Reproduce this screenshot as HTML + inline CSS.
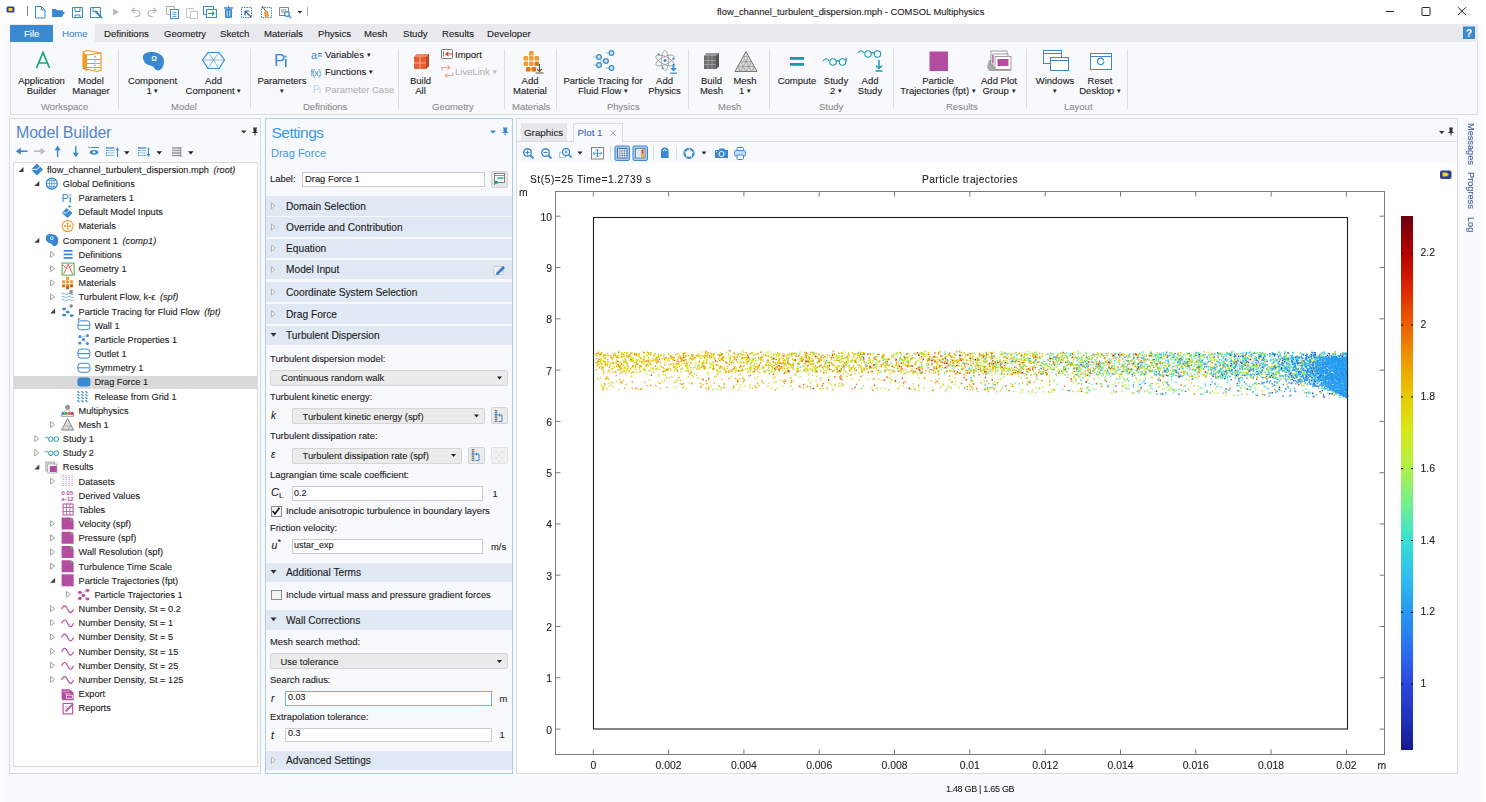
<!DOCTYPE html>
<html><head><meta charset="utf-8">
<style>
*{box-sizing:border-box;margin:0;padding:0}
html,body{width:1486px;height:802px;overflow:hidden}
body{position:relative;background:#f9fafd;font-family:"Liberation Sans",sans-serif;color:#1a1a1a;font-size:9.5px;-webkit-text-stroke:0.1px currentColor}
.a{position:absolute}
.t{position:absolute;white-space:nowrap;line-height:1}
svg{position:absolute;overflow:visible}
/* title bar */
#title{left:0;top:0;width:1486px;height:24px;background:#fff}
/* ribbon */
#tabs{left:10px;top:24px;width:1468px;height:19px;background:#e9eaee}
#file{left:10px;top:25px;width:43px;height:17px;background:#3b89d0;color:#fff}
#home{left:53px;top:24px;width:42px;height:19px;background:#f8f9fd}
#rbody{left:10px;top:42px;width:1468px;height:73px;background:#f8f9fd;border:1px solid #dcdde2;border-top:none}
.tab{font-size:9.6px;top:29.2px}
.sep{position:absolute;width:1px;background:#dcdde3;top:49px;height:60px}
.rl{font-size:9.5px;color:#222;text-align:center;line-height:10px;position:absolute;white-space:nowrap}
.gl{font-size:9.5px;color:#8c8c8c;position:absolute;top:101.3px;white-space:nowrap}
.cr{font-size:7px;vertical-align:1px}
.sm{font-size:9.5px;position:absolute;white-space:nowrap}
/* panels */
#mb{left:9px;top:118px;width:252px;height:656px;border:1px solid #d8d9de;background:#f9fafd}
#tree{left:13px;top:162px;width:245px;height:605px;border:1px solid #dcdcdc;background:#fff}
#st{left:265px;top:118px;width:248px;height:656px;border:1px solid #a6cff3;background:#f8f9fd}
#gr{left:516px;top:118px;width:942px;height:656px;border:1px solid #dadbe0;background:#f8f9fc}
.ttl{font-size:16px;color:#5686c6;letter-spacing:-0.2px;-webkit-text-stroke:0}
.row{position:absolute;font-size:9.2px;white-space:nowrap;line-height:1}
.sh{position:absolute;left:266px;width:246px;height:19.5px;background:#dfe8f3}
.sht{position:absolute;left:286px;font-size:10.2px;white-space:nowrap;line-height:1}
.dd{position:absolute;background:#ebebeb;border:1px solid #d6d6d6;border-radius:2px}
.inp{position:absolute;background:#fff;border:1px solid #cdcdcd}
.pl{font-size:10.4px;color:#222}
.lab{position:absolute;left:270px;font-size:9.4px;white-space:nowrap;line-height:1}
</style></head><body>
<div id="title" class="a"></div>
<div class="a" style="left:0;top:24px;width:4px;height:778px;background:#fdfdfe"></div>
<div class="a" style="left:1483px;top:24px;width:3px;height:778px;background:#fdfdfe"></div>
<div class="t" style="left:717px;top:7px;font-size:9.4px;color:#1a1a1a">flow_channel_turbulent_dispersion.mph - COMSOL Multiphysics</div>

<div id="tabs" class="a"></div>
<div id="rbody" class="a"></div>
<div id="home" class="a"></div>
<div id="file" class="a"></div>
<div class="t tab" style="left:24px;color:#fff">File</div>
<div class="t tab" style="left:62px;color:#3d8ad4">Home</div>
<div class="t tab" style="left:104px">Definitions</div>
<div class="t tab" style="left:164px">Geometry</div>
<div class="t tab" style="left:220px">Sketch</div>
<div class="t tab" style="left:264px">Materials</div>
<div class="t tab" style="left:318px">Physics</div>
<div class="t tab" style="left:364px">Mesh</div>
<div class="t tab" style="left:403px">Study</div>
<div class="t tab" style="left:442px">Results</div>
<div class="t tab" style="left:487px">Developer</div>


<!-- ribbon separators -->
<div class="sep" style="left:118px"></div>
<div class="sep" style="left:250px"></div>
<div class="sep" style="left:398px"></div>
<div class="sep" style="left:504px"></div>
<div class="sep" style="left:556px"></div>
<div class="sep" style="left:688px"></div>
<div class="sep" style="left:769px"></div>
<div class="sep" style="left:893px"></div>
<div class="sep" style="left:1026px"></div>
<div class="sep" style="left:1127px"></div>
<!-- large button labels -->
<div class="rl" style="left:11px;width:61px;top:76px">Application<br>Builder</div>
<div class="rl" style="left:66px;width:50px;top:76px">Model<br>Manager</div>
<div class="rl" style="left:122px;width:61px;top:76px">Component<br>1 <span class="cr">&#9662;</span></div>
<div class="rl" style="left:180px;width:67px;top:76px">Add<br>Component <span class="cr">&#9662;</span></div>
<div class="rl" style="left:255px;width:54px;top:76px">Parameters<br><span class="cr">&#9662;</span></div>
<div class="rl" style="left:405px;width:31px;top:76px">Build<br>All</div>
<div class="rl" style="left:508px;width:44px;top:76px">Add<br>Material</div>
<div class="rl" style="left:560px;width:86px;top:76px">Particle Tracing for<br>Fluid Flow <span class="cr">&#9662;</span></div>
<div class="rl" style="left:646px;width:37px;top:76px">Add<br>Physics</div>
<div class="rl" style="left:695px;width:33px;top:76px">Build<br>Mesh</div>
<div class="rl" style="left:729px;width:32px;top:76px">Mesh<br>1 <span class="cr">&#9662;</span></div>
<div class="rl" style="left:774px;width:46px;top:76px">Compute</div>
<div class="rl" style="left:819px;width:34px;top:76px">Study<br>2 <span class="cr">&#9662;</span></div>
<div class="rl" style="left:853px;width:34px;top:76px">Add<br>Study</div>
<div class="rl" style="left:898px;width:80px;top:76px">Particle<br>Trajectories (fpt) <span class="cr">&#9662;</span></div>
<div class="rl" style="left:978px;width:42px;top:76px">Add Plot<br>Group <span class="cr">&#9662;</span></div>
<div class="rl" style="left:1033px;width:44px;top:76px">Windows<br><span class="cr">&#9662;</span></div>
<div class="rl" style="left:1077px;width:46px;top:76px">Reset<br>Desktop <span class="cr">&#9662;</span></div>
<!-- group labels -->
<div class="gl" style="left:41px">Workspace</div>
<div class="gl" style="left:171px">Model</div>
<div class="gl" style="left:303px">Definitions</div>
<div class="gl" style="left:432px">Geometry</div>
<div class="gl" style="left:512px">Materials</div>
<div class="gl" style="left:607px">Physics</div>
<div class="gl" style="left:718px">Mesh</div>
<div class="gl" style="left:819px">Study</div>
<div class="gl" style="left:946px">Results</div>
<div class="gl" style="left:1064px">Layout</div>
<!-- small buttons -->
<div class="sm" style="left:325px;top:49px">Variables <span class="cr">&#9662;</span></div>
<div class="sm" style="left:325px;top:66px">Functions <span class="cr">&#9662;</span></div>
<div class="sm" style="left:325px;top:84px;color:#b4b4b4">Parameter Case</div>
<div class="sm" style="left:455px;top:49px">Import</div>
<div class="sm" style="left:455px;top:66px;color:#b4b4b4">LiveLink <span class="cr">&#9662;</span></div>


<svg class="a" style="left:0;top:0" width="1486" height="120" viewBox="0 0 1486 120">
<!-- title bar -->
<rect x="6.5" y="6.5" width="8" height="6" rx="1.5" fill="#2a3f9a"/><rect x="8.5" y="8" width="4" height="3" fill="#f2d21a"/>
<line x1="27.5" y1="6" x2="27.5" y2="16" stroke="#8a8a8a"/>
<path d="M35.5 6.5h6l3.5 3.5v8h-9.5z M41.5 6.5v3.5h3.5" fill="none" stroke="#3a89d0" stroke-width="1"/>
<path d="M52 9h4l1 1.2h6v2H56l-3 5H52z M53 17l3-5h9l-3 5z" fill="#3a89d0"/>
<path d="M72.5 7.5h10v10h-10z M75 7.5v4h5v-4 M75 17.5v-2.5h5v2.5" fill="none" stroke="#3a89d0" stroke-width="1"/>
<path d="M90.5 7.5h10v10h-10z M93 7.5v4h5" fill="none" stroke="#3a89d0" stroke-width="1"/><path d="M95 11l7 7" stroke="#3a89d0" stroke-width="1.8"/>
<path d="M113 8.5l6 3.5-6 3.5z" fill="#b8b8b8"/>
<path d="M132 10.5h5a3 3 0 0 1 0 6h-2 M134.5 8l-2.5 2.5 2.5 2.5" fill="none" stroke="#b8b8b8" stroke-width="1.2"/>
<path d="M156 10.5h-5a3 3 0 0 0 0 6h2 M153.5 8l2.5 2.5-2.5 2.5" fill="none" stroke="#b8b8b8" stroke-width="1.2"/>
<path d="M166.5 6.5h8v8h-8z" fill="none" stroke="#9a9a9a" stroke-width="0.8"/><rect x="170.5" y="9.5" width="8" height="9" fill="#fff" stroke="#3a89d0"/><path d="M172.5 12.5h4M172.5 14.5h4M172.5 16.5h4" stroke="#3a89d0" stroke-width="0.8"/>
<path d="M186.5 8.5h7v9h-7z" fill="none" stroke="#c8c8c8"/><rect x="190.5" y="11.5" width="7" height="7" fill="#fff" stroke="#c8c8c8"/>
<rect x="203.5" y="6.5" width="10" height="8" fill="none" stroke="#3a89d0"/><rect x="206.5" y="9.5" width="10" height="8" fill="#fff" stroke="#3a89d0"/><path d="M208 13.5h6M212 11.5l2 2-2 2" fill="none" stroke="#3a89d0" stroke-width="1.2"/>
<path d="M224 8h9M228 6.5h1" stroke="#3a89d0" stroke-width="1.3"/><rect x="225" y="9" width="7" height="9" rx="1" fill="#3a89d0"/><path d="M227.2 10.5v6M229.8 10.5v6" stroke="#fff" stroke-width="0.8"/>
<rect x="241.5" y="7.5" width="10" height="10" fill="none" stroke="#3a89d0" stroke-dasharray="1.5 1"/><path d="M245 11l6 6M245 11v4.5M245 11h4.5" fill="none" stroke="#2a5fa0" stroke-width="1.2"/>
<rect x="261.5" y="7.5" width="10" height="10" fill="none" stroke="#3a89d0" stroke-dasharray="1.5 1"/><path d="M262 6l5 7" stroke="#555" stroke-width="1"/><path d="M264 12l4-1 1 5-4 2z" fill="#f0a040"/>
<path d="M279.5 7.5h9v8h-9z M281 10h5M281 12h4" fill="none" stroke="#777" stroke-width="0.9"/><circle cx="287" cy="14" r="2.3" fill="#fff" stroke="#3a89d0" stroke-width="1.2"/><path d="M288.6 15.6l2.5 2.5" stroke="#3a89d0" stroke-width="1.4"/>
<path d="M297.5 11h4.5l-2.25 2.5z" fill="#222"/>
<line x1="307.5" y1="7" x2="307.5" y2="16" stroke="#aaa"/>
<!-- window controls -->
<line x1="1386" y1="11.5" x2="1394" y2="11.5" stroke="#222" stroke-width="1"/>
<rect x="1422" y="7.5" width="8" height="8" rx="0.8" fill="none" stroke="#222" stroke-width="1"/>
<path d="M1458 7.2l8 8M1466 7.2l-8 8" stroke="#222" stroke-width="1"/>
<rect x="1463" y="26.5" width="12" height="12.5" fill="#3a89d0"/><text x="1469" y="36.5" font-size="10.5" font-weight="bold" fill="#fff" text-anchor="middle" font-family="Liberation Sans">?</text>
<!-- Workspace -->
<path d="M36.5 68L43 52.5 49.5 68M38.8 63h8.4" fill="none" stroke="#1aa37a" stroke-width="1.7"/>
<path d="M83 52l4-1.5 14 2.5v17l-4 1.5-14-3z" fill="#fff" stroke="#f09a2a" stroke-width="1.2"/>
<path d="M83 52l4 3v16.5l-4-3z" fill="#f09a2a"/><path d="M87 55l14-2" stroke="#f09a2a" stroke-width="1.2"/>
<path d="M87 59.5h14M87 63.5h14M87 67.5h14" stroke="#f09a2a" stroke-width="1.2"/>
<path d="M95 56v1.5M95 60.5v1.5M95 64.5v1.5M95 68.5v1.5" stroke="#3a5a9a" stroke-width="0.8"/>
<!-- Model -->
<path d="M143 57c0-4 5-5.5 10-5 6 .5 11 4 11 9 0 4-2 9.5-6 9.5-3 0-3.5-3-5-4-3-1.5-10-1.5-10-9.5z" fill="#3a89d0"/>
<text x="154" y="61" font-size="7" fill="#fff" text-anchor="middle" font-family="Liberation Sans" font-weight="bold">Ω</text>
<path d="M202.5 60l5.5-7.5h11l5.5 7.5-5.5 8.5h-11z" fill="none" stroke="#3a89d0" stroke-width="1.2"/>
<path d="M208 52.5l5.5 7.5-5.5 8.5M219 52.5l-5.5 7.5 5.5 8.5M202.5 60h22" fill="none" stroke="#3a89d0" stroke-width="0.8" opacity="0.7"/>
<!-- Definitions -->
<text x="274" y="66" font-size="17" fill="#3a89d0" font-family="Liberation Sans">P</text><rect x="285" y="59" width="1.6" height="8" fill="#3a89d0"/><rect x="285" y="55.5" width="1.6" height="1.8" fill="#3a89d0"/>
<text x="311" y="58.5" font-size="11" fill="#3a89d0" font-family="Liberation Sans">a</text><path d="M318 53.5h4M318 56h4" stroke="#3a89d0" stroke-width="1"/>
<text x="310.5" y="75.5" font-size="8.5" fill="#3a89d0" font-family="Liberation Sans" letter-spacing="-0.6">f(x)</text>
<text x="313" y="92.5" font-size="10" fill="#bcd6ee" font-family="Liberation Sans">P</text><rect x="319.5" y="88.5" width="1.2" height="5" fill="#bcd6ee"/>
<!-- Geometry -->
<path d="M414 57l3-3h12v12l-3 3h-12z" fill="#e45d33"/><path d="M417 54h12l-3 3h-12z" fill="#f28a68"/><path d="M426 57v12l3-3V54z" fill="#c24822"/>
<path d="M414 63h12M420 57v12" stroke="#f8b49a" stroke-width="0.9"/>
<rect x="441.5" y="49.5" width="11" height="9" rx="1" fill="#fff" stroke="#777" stroke-width="1"/><path d="M443.5 51.5v5" stroke="#777"/><path d="M446 54h7M448.5 52l-2.5 2 2.5 2" fill="none" stroke="#e0402a" stroke-width="1.2"/>
<path d="M442 70.5v-3h8M447.5 65.5l2.5 2-2.5 2 M453 72.5v3h-8M447.5 77.5l-2.5-2 2.5-2" fill="none" stroke="#f0a898" stroke-width="1.2"/>
<!-- Materials -->
<g fill="#f0a030"><rect x="529" y="51" width="4.6" height="4.6" rx="1.2"/><rect x="523.5" y="56" width="4.6" height="4.6" rx="1.2"/><rect x="529" y="56" width="4.6" height="4.6" rx="1.2"/><rect x="534.5" y="56" width="4.6" height="4.6" rx="1.2"/><rect x="523.5" y="61.5" width="4.6" height="4.6" rx="1.2"/><rect x="529" y="61.5" width="4.6" height="4.6" rx="1.2"/><rect x="534.5" y="61.5" width="4.6" height="4.6" rx="1.2" fill="#d88018"/><rect x="526" y="67" width="4.6" height="4.6" rx="1.2" fill="#d07a18"/><rect x="531.5" y="67" width="4.6" height="4.6" rx="1.2" fill="#d07a18"/></g>
<path d="M539.5 64v7M536.8 68.8l2.7 2.7 2.7-2.7M535.5 73h8" fill="none" stroke="#555" stroke-width="1.1"/>
<!-- Physics -->
<path d="M593 57h3.5" stroke="#c0d8f0" stroke-width="1.8"/><circle cx="599" cy="57" r="2.3" fill="#d4e6f6" stroke="#3a89d0" stroke-width="1.3"/><path d="M600 61h3.5" stroke="#c0d8f0" stroke-width="1.8"/><circle cx="606" cy="61" r="2.3" fill="#d4e6f6" stroke="#3a89d0" stroke-width="1.3"/><path d="M593 65h3.5" stroke="#c0d8f0" stroke-width="1.8"/><circle cx="599" cy="65" r="2.3" fill="#d4e6f6" stroke="#3a89d0" stroke-width="1.3"/><path d="M605.5 53h3.5" stroke="#c0d8f0" stroke-width="1.8"/><circle cx="611.5" cy="53" r="2.3" fill="#d4e6f6" stroke="#3a89d0" stroke-width="1.3"/><path d="M605.5 68h3.5" stroke="#c0d8f0" stroke-width="1.8"/><circle cx="611.5" cy="68" r="2.3" fill="#d4e6f6" stroke="#3a89d0" stroke-width="1.3"/>
<g fill="none" stroke="#999" stroke-width="0.8"><ellipse cx="665" cy="60.5" rx="10" ry="3.8" transform="rotate(25 665 60.5)"/><ellipse cx="665" cy="60.5" rx="10" ry="3.8" transform="rotate(-25 665 60.5)"/><ellipse cx="665" cy="60.5" rx="3.5" ry="10"/></g>
<circle cx="665" cy="60.5" r="1.5" fill="#3a89d0"/><circle cx="658.5" cy="54.5" r="1.1" fill="#3a89d0"/><circle cx="673.5" cy="58.5" r="1.1" fill="#3a89d0"/><circle cx="662.5" cy="68" r="1.1" fill="#3a89d0"/>
<path d="M673.5 64v4.5" stroke="#3a89d0" stroke-width="1.8"/><path d="M670.3 68h6.4l-3.2 3.5z" fill="#3a89d0"/><path d="M670 73.2h7" stroke="#3a89d0" stroke-width="1.2"/>
<!-- Mesh -->
<path d="M704 56l3-3h12v13l-3 3h-12z" fill="#6d6d6d"/><path d="M707 53h12l-3 3h-12z" fill="#999"/><path d="M716 56v13l3-3V53z" fill="#555"/>
<path d="M704 60.5h12M704 64.5h12M708 56v13M712 56v13" stroke="#aaa" stroke-width="0.7"/>
<path d="M746 51.5l11 20h-22z" fill="#d8d8d8" stroke="#777" stroke-width="1"/>
<path d="M743.25 56.5h5.5M740.5 61.5h11M737.75 66.5h16.5M743.25 56.5l8.25 15M740.5 61.5l5.5 10M737.75 66.5l2.75 5M748.75 56.5l-8.25 15M751.5 61.5l-5.5 10M754.25 66.5l-2.75 5" stroke="#888" stroke-width="0.6"/>
<!-- Study -->
<rect x="790" y="57" width="14" height="2.8" fill="#1e9ab0"/><rect x="790" y="63" width="14" height="2.8" fill="#1e9ab0"/>
<g fill="none" stroke="#1e9ab0" stroke-width="1.1"><path d="M823 61c2-3 4-3 6 0"/><circle cx="833" cy="62" r="3.2"/><circle cx="842.5" cy="62" r="3.2"/><path d="M836.2 61.5c1-1 2.3-1 3.3 0M845.7 62c.5-2.5 1-4 0-4.5"/></g>
<g fill="none" stroke="#1e9ab0" stroke-width="1.1"><path d="M858 53c2-3 4-3 6 0"/><circle cx="868" cy="54" r="3.2"/><circle cx="877.5" cy="54" r="3.2"/><path d="M871.2 53.5c1-1 2.3-1 3.3 0"/></g>
<path d="M879 60v8M876 65.5l3 3 3-3M875.5 71h7" fill="none" stroke="#1e9ab0" stroke-width="1.5"/>
<!-- Results -->
<rect x="929.5" y="51.5" width="18.5" height="19.5" fill="#b44da0"/>
<path d="M989 60l-2 7 2 4h22v-4l-2-7z" fill="#aaa"/><rect x="991" y="51" width="16" height="14" fill="#fff" stroke="#888" stroke-width="0.8"/><rect x="993" y="54" width="15" height="13" fill="#fff" stroke="#888" stroke-width="0.8"/><rect x="995" y="56.5" width="16" height="13" fill="#fff" stroke="#888" stroke-width="0.8"/><rect x="997.5" y="59" width="11" height="7" fill="#b44da0"/><rect x="992" y="55" width="1.5" height="8" fill="#c66cb4"/>
<!-- Layout -->
<rect x="1043.5" y="50.5" width="18" height="13" fill="#fff" stroke="#3a89d0" stroke-width="1"/><path d="M1043.5 53.5h18" stroke="#3a89d0"/>
<rect x="1050.5" y="57.5" width="18" height="13" fill="#fff" stroke="#3a89d0" stroke-width="1"/><path d="M1050.5 60.5h18" stroke="#3a89d0"/>
<rect x="1090.5" y="53.5" width="21" height="16" fill="#fff" stroke="#3a89d0" stroke-width="1"/><path d="M1090.5 56.5h21" stroke="#3a89d0"/>
<path d="M1104 61.5a3.3 3.3 0 1 1-1-2.5" fill="none" stroke="#3a89d0" stroke-width="1.2"/><path d="M1101.5 57.5l2.5 1.5-.5 2.5z" fill="#3a89d0"/>
</svg>

<div id="mb" class="a"></div>
<div id="tree" class="a"></div>

<div class="t ttl" style="left:16px;top:125px">Model Builder</div>
<svg class="a" style="left:0;top:0" width="300" height="170">
<path d="M241 130.5h5.5l-2.75 3z" fill="#333"/>
<path d="M253 128h4M254 128v4.5h2V128M252.5 132.5h5M255 132.5v3" stroke="#333" stroke-width="1" fill="#333"/>
<path d="M20 151.2h7.5" stroke="#3a89d0" stroke-width="1.6"/><path d="M15.8 151.2l5-3.5v7z" fill="#3a89d0"/>
<path d="M34 151.2h7.5" stroke="#bdbdbd" stroke-width="1.6"/><path d="M45.5 151.2l-5-3.5v7z" fill="#bdbdbd"/>
<path d="M57.6 150v7.2" stroke="#3a89d0" stroke-width="1.4"/><path d="M57.6 145.8l-3.2 4.5h6.4z" fill="#3a89d0"/>
<path d="M75.8 146v7.2" stroke="#3a89d0" stroke-width="1.4"/><path d="M75.8 157.2l-3.2-4.5h6.4z" fill="#3a89d0"/>
<path d="M88.6 147.5h1.5M91 147.5h8" stroke="#3a89d0" stroke-width="1.2"/><ellipse cx="94" cy="152.3" rx="4.3" ry="2.4" fill="#3a89d0"/><ellipse cx="94" cy="152.3" rx="1.6" ry="1" fill="#fff"/>
<path d="M106.0 148h8.5" stroke="#3a89d0" stroke-width="1.3"/><path d="M106.0 150.5h8.5M106.0 153h8.5M106.0 155.5h8.5" stroke="#8dbbe6" stroke-width="1.2"/><path d="M106.6 147.5v9.5" stroke="#3a89d0" stroke-width="1.1" stroke-dasharray="1.2 1.2"/><path d="M117.5 157v-6.5" stroke="#3a89d0" stroke-width="1.1"/><path d="M117.5 147.5l-2 3h4z" fill="#3a89d0"/>
<path d="M124 151.3h5.5l-2.75 3.2z" fill="#222"/>
<path d="M138.0 148h8.5" stroke="#3a89d0" stroke-width="1.3"/><path d="M138.0 150.5h8.5M138.0 153h8.5M138.0 155.5h8.5" stroke="#8dbbe6" stroke-width="1.2"/><path d="M138.6 147.5v9.5" stroke="#3a89d0" stroke-width="1.1" stroke-dasharray="1.2 1.2"/><path d="M148.5 147.5v6.5" stroke="#3a89d0" stroke-width="1.1"/><path d="M148.5 157l-2-3h4z" fill="#3a89d0"/>
<path d="M156.5 151.3h5.5l-2.75 3.2z" fill="#222"/>
<path d="M172 148h9.5M172 150.5h9.5M172 153h9.5M172 155.5h9.5" stroke="#9a9a9a" stroke-width="1.3"/><path d="M180.5 147.5v9.5" stroke="#3a89d0" stroke-width="1.2" stroke-dasharray="1 1"/>
<path d="M188 151.3h5.5l-2.75 3.2z" fill="#222"/>
</svg>
<!--TREE--><div class="a" style="left:14px;top:375.5px;width:243px;height:13.5px;background:#d9d9d9"></div>
<div class="row" style="left:47.0px;top:165.8px">flow_channel_turbulent_dispersion.mph <i style="margin-left:2px">(root)</i></div>
<div class="row" style="left:62.8px;top:179.97px">Global Definitions</div>
<div class="row" style="left:78.6px;top:194.14px">Parameters 1</div>
<div class="row" style="left:78.6px;top:208.31px">Default Model Inputs</div>
<div class="row" style="left:78.6px;top:222.48px">Materials</div>
<div class="row" style="left:62.8px;top:236.65px">Component 1 <i style="margin-left:2px">(comp1)</i></div>
<div class="row" style="left:78.6px;top:250.82px">Definitions</div>
<div class="row" style="left:78.6px;top:264.99px">Geometry 1</div>
<div class="row" style="left:78.6px;top:279.16px">Materials</div>
<div class="row" style="left:78.6px;top:293.33px">Turbulent Flow, k-ε <i style="margin-left:2px">(spf)</i></div>
<div class="row" style="left:78.6px;top:307.5px">Particle Tracing for Fluid Flow <i style="margin-left:2px">(fpt)</i></div>
<div class="row" style="left:94.4px;top:321.67px">Wall 1</div>
<div class="row" style="left:94.4px;top:335.84px">Particle Properties 1</div>
<div class="row" style="left:94.4px;top:350.01px">Outlet 1</div>
<div class="row" style="left:94.4px;top:364.18px">Symmetry 1</div>
<div class="row" style="left:94.4px;top:378.35px">Drag Force 1</div>
<div class="row" style="left:94.4px;top:392.52px">Release from Grid 1</div>
<div class="row" style="left:78.6px;top:406.69px">Multiphysics</div>
<div class="row" style="left:78.6px;top:420.86px">Mesh 1</div>
<div class="row" style="left:62.8px;top:435.03px">Study 1</div>
<div class="row" style="left:62.8px;top:449.2px">Study 2</div>
<div class="row" style="left:62.8px;top:463.37px">Results</div>
<div class="row" style="left:78.6px;top:477.54px">Datasets</div>
<div class="row" style="left:78.6px;top:491.71px">Derived Values</div>
<div class="row" style="left:78.6px;top:505.88px">Tables</div>
<div class="row" style="left:78.6px;top:520.05px">Velocity (spf)</div>
<div class="row" style="left:78.6px;top:534.22px">Pressure (spf)</div>
<div class="row" style="left:78.6px;top:548.39px">Wall Resolution (spf)</div>
<div class="row" style="left:78.6px;top:562.56px">Turbulence Time Scale</div>
<div class="row" style="left:78.6px;top:576.73px">Particle Trajectories (fpt)</div>
<div class="row" style="left:94.4px;top:590.9px">Particle Trajectories 1</div>
<div class="row" style="left:78.6px;top:605.07px">Number Density, St = 0.2</div>
<div class="row" style="left:78.6px;top:619.24px">Number Density, St = 1</div>
<div class="row" style="left:78.6px;top:633.41px">Number Density, St = 5</div>
<div class="row" style="left:78.6px;top:647.58px">Number Density, St = 15</div>
<div class="row" style="left:78.6px;top:661.75px">Number Density, St = 25</div>
<div class="row" style="left:78.6px;top:675.92px">Number Density, St = 125</div>
<div class="row" style="left:78.6px;top:690.09px">Export</div>
<div class="row" style="left:78.6px;top:704.26px">Reports</div>
<svg class="a" style="left:0;top:0" width="300" height="802"><path d="M23.5 166.9v5h-5z" fill="#404040"/><path d="M31.0 169.4l6-6 6 6-6 6z" fill="#3a89d0"/><path d="M31.0 169.4h6l3-3" fill="none" stroke="#fff" stroke-width="1"/><path d="M39.3 181.1v5h-5z" fill="#404040"/><circle cx="51.8" cy="183.6" r="5.5" fill="#fff" stroke="#3a89d0" stroke-width="1.3"/><path d="M46.8 183.6h10M51.8 178.1v11M47.8 180.6h8M47.8 186.6h8" stroke="#3a89d0" stroke-width="0.7"/><ellipse cx="51.8" cy="183.6" rx="2.5" ry="5.5" fill="none" stroke="#3a89d0" stroke-width="0.7"/><text x="61.6" y="202.2" font-size="11" fill="#3a89d0" font-family="Liberation Sans">P</text><rect x="69.6" y="196.7" width="1.3" height="6" fill="#3a89d0"/><rect x="69.6" y="194.2" width="1.3" height="1.3" fill="#3a89d0"/><path d="M61.6 212.9l5-5 6 5-5 5z" fill="#3a89d0"/><path d="M61.6 212.9h5l3-3" fill="none" stroke="#fff" stroke-width="0.8"/><path d="M68.6 204.9v5M68.6 204.9l3 1.5-3 1.5" fill="#1e9ab0"/><circle cx="67.6" cy="226.1" r="5.5" fill="#fff" stroke="#f09a2a" stroke-width="1.1"/><g fill="#f09a2a"><circle cx="67.6" cy="223.6" r="1.1"/><circle cx="65.1" cy="226.1" r="1.1"/><circle cx="70.1" cy="226.1" r="1.1"/><circle cx="67.6" cy="228.6" r="1.1"/><circle cx="67.6" cy="226.1" r="1.1"/></g><path d="M39.3 237.7v5h-5z" fill="#404040"/><path d="M45.8 237.7c0-3 3-4 6.5-3.5 4 .5 6 3 6 6 0 3-1.5 6-4 6-2 0-2-2-3-2.5-2-1-5.5-1-5.5-6z" fill="#3a89d0"/><circle cx="51.8" cy="238.2" r="1.4" fill="none" stroke="#fff" stroke-width="0.8"/><path d="M50.6 251.4l4 3-4 3z" fill="#fff" stroke="#9a9a9a" stroke-width="0.9"/><path d="M63.6 250.9h9M63.6 254.4h9M63.6 257.9h9" stroke="#3a89d0" stroke-width="1.6"/><path d="M50.6 265.6l4 3-4 3z" fill="#fff" stroke="#9a9a9a" stroke-width="0.9"/><rect x="62.1" y="263.1" width="12" height="12" fill="#fff" stroke="#4caa4c" stroke-width="1"/><path d="M63.6 274.1l4.5-10 4.5 10M62.6 264.6l4 4M72.6 264.6l-3 3" fill="none" stroke="#e8503a" stroke-width="0.9"/><path d="M50.6 279.8l4 3-4 3z" fill="#fff" stroke="#9a9a9a" stroke-width="0.9"/><g fill="#f09a2a"><rect x="66.1" y="276.8" width="3" height="3"/><rect x="62.1" y="280.3" width="3" height="3"/><rect x="66.1" y="280.3" width="3" height="3"/><rect x="70.1" y="280.3" width="3" height="3"/><rect x="62.1" y="284.3" width="3" height="3" fill="#e07810"/><rect x="66.1" y="284.3" width="3" height="3" fill="#e07810"/><rect x="70.1" y="284.3" width="3" height="3" fill="#c06010"/><rect x="66.1" y="286.8" width="3" height="2.5" fill="#c06010"/></g><path d="M50.6 293.9l4 3-4 3z" fill="#fff" stroke="#9a9a9a" stroke-width="0.9"/><path d="M61.6 293.9q1.5-1.5 3 0t3 0 3 0 3 0M61.6 296.9q1.5-1.5 3 0t3 0 3 0 3 0M61.6 299.9q1.5-1.5 3 0t3 0 3 0 3 0" fill="none" stroke="#6aaae0" stroke-width="0.9"/><circle cx="71.1" cy="291.9" r="1.8" fill="#888"/><path d="M55.1 308.6v5h-5z" fill="#404040"/><g fill="#3a89d0"><ellipse cx="64.1" cy="309.1" rx="2" ry="1.4"/><ellipse cx="67.6" cy="312.1" rx="2" ry="1.4"/><ellipse cx="64.1" cy="315.1" rx="2" ry="1.4"/><ellipse cx="71.6" cy="315.6" rx="2" ry="1.4"/></g><circle cx="71.1" cy="306.1" r="1.8" fill="#888"/><rect x="77.9" y="320.8" width="12" height="9" rx="3" fill="#fff" stroke="#3a89d0" stroke-width="1"/><path d="M77.9 325.3h12" stroke="#3a89d0" stroke-width="1"/><path d="M78.4 318.8v2M78.4 318.8h2" stroke="#333" stroke-width="0.7"/><g fill="#3a89d0"><circle cx="79.9" cy="336.4" r="1.5"/><circle cx="83.4" cy="339.4" r="1.5"/><circle cx="79.9" cy="342.9" r="1.5"/><circle cx="87.4" cy="335.4" r="1.5"/><circle cx="87.4" cy="343.4" r="1.5"/></g><path d="M81.4 337.4l6-2M84.4 340.4l3 3" stroke="#8bbce8" stroke-width="0.8"/><rect x="77.9" y="349.1" width="12" height="9" rx="3" fill="#fff" stroke="#3a89d0" stroke-width="1"/><path d="M77.9 353.6h12" stroke="#3a89d0" stroke-width="1"/><rect x="77.9" y="363.3" width="12" height="9" rx="3" fill="#fff" stroke="#3a89d0" stroke-width="1"/><path d="M77.9 367.8h12" stroke="#3a89d0" stroke-width="1"/><rect x="77.4" y="377.4" width="13" height="9" rx="3" fill="#3a89d0"/><path d="M77.4 391.1l2 2M81.4 391.1l2 2M85.4 391.1l2 2" stroke="#3a89d0" stroke-width="1.3"/><path d="M77.4 394.1l2 2M81.4 394.1l2 2M85.4 394.1l2 2" stroke="#3a89d0" stroke-width="1.3"/><path d="M77.4 397.1l2 2M81.4 397.1l2 2M85.4 397.1l2 2" stroke="#3a89d0" stroke-width="1.3"/><path d="M77.4 400.1l2 2M81.4 400.1l2 2M85.4 400.1l2 2" stroke="#3a89d0" stroke-width="1.3"/><circle cx="67.6" cy="407.3" r="2.5" fill="#999"/><path d="M61.6 414.3h12v2h-12z" fill="#fff" stroke="#555" stroke-width="0.6"/><circle cx="63.1" cy="413.3" r="1.5" fill="#3a89d0"/><circle cx="66.1" cy="413.3" r="1.5" fill="#3bb04a"/><circle cx="69.1" cy="413.3" r="1.5" fill="#e86a30"/><circle cx="72.1" cy="413.3" r="1.5" fill="#e0208a"/><path d="M67.6 409.3l-4 3M67.6 409.3l4 3" stroke="#888" stroke-width="0.6"/><path d="M50.6 421.5l4 3-4 3z" fill="#fff" stroke="#9a9a9a" stroke-width="0.9"/><path d="M67.6 418.5l6 11.5h-12z" fill="#ddd" stroke="#777" stroke-width="0.9"/><path d="M64.6 426.0h6M67.6 430.0l3-4" stroke="#888" stroke-width="0.6"/><path d="M34.8 435.6l4 3-4 3z" fill="#fff" stroke="#9a9a9a" stroke-width="0.9"/><path d="M44.8 438.6c1.2-2 2.5-2 3.5 0" fill="none" stroke="#1e9ab0" stroke-width="1"/><circle cx="50.8" cy="439.1" r="2.3" fill="none" stroke="#1e9ab0" stroke-width="1"/><circle cx="56.3" cy="439.1" r="2.3" fill="none" stroke="#1e9ab0" stroke-width="1"/><path d="M34.8 449.8l4 3-4 3z" fill="#fff" stroke="#9a9a9a" stroke-width="0.9"/><path d="M44.8 452.8c1.2-2 2.5-2 3.5 0" fill="none" stroke="#1e9ab0" stroke-width="1"/><circle cx="50.8" cy="453.3" r="2.3" fill="none" stroke="#1e9ab0" stroke-width="1"/><circle cx="56.3" cy="453.3" r="2.3" fill="none" stroke="#1e9ab0" stroke-width="1"/><path d="M39.3 464.5v5h-5z" fill="#404040"/><rect x="45.8" y="462.0" width="9" height="9" fill="#ddd" stroke="#888" stroke-width="0.6"/><rect x="47.8" y="464.0" width="9" height="9" fill="#fff" stroke="#888" stroke-width="0.6"/><rect x="49.8" y="466.0" width="7" height="6" fill="#b44da0"/><path d="M50.6 478.1l4 3-4 3z" fill="#fff" stroke="#9a9a9a" stroke-width="0.9"/><g fill="none" stroke="#b44da0" stroke-width="0.8" stroke-dasharray="1 1"><path d="M63.1 475.1v12M66.1 475.1v12M69.1 475.1v12M72.1 475.1v12"/></g><text x="61.6" y="494.8" font-size="6" fill="#b44da0" font-family="Liberation Sans" font-weight="bold">0.05</text><text x="61.6" y="500.8" font-size="6" fill="#b44da0" font-family="Liberation Sans" font-weight="bold">e-12</text><rect x="63.1" y="504.0" width="10" height="11" fill="#fff" stroke="#b44da0" stroke-width="1"/><path d="M63.1 507.5h10M63.1 511.5h10M66.6 503.5v11.5M69.9 503.5v11.5" stroke="#b44da0" stroke-width="0.8"/><path d="M50.6 520.6l4 3-4 3z" fill="#fff" stroke="#9a9a9a" stroke-width="0.9"/><path d="M61.6 517.6h9l3 3v9h-12z" fill="#b44da0"/><circle cx="71.6" cy="519.6" r="1.8" fill="#888"/><path d="M50.6 534.8l4 3-4 3z" fill="#fff" stroke="#9a9a9a" stroke-width="0.9"/><path d="M61.6 531.8h9l3 3v9h-12z" fill="#b44da0"/><circle cx="71.6" cy="533.8" r="1.8" fill="#888"/><path d="M50.6 549.0l4 3-4 3z" fill="#fff" stroke="#9a9a9a" stroke-width="0.9"/><path d="M61.6 546.0h9l3 3v9h-12z" fill="#b44da0"/><circle cx="71.6" cy="548.0" r="1.8" fill="#888"/><path d="M50.6 563.2l4 3-4 3z" fill="#fff" stroke="#9a9a9a" stroke-width="0.9"/><path d="M61.6 560.2h9l3 3v9h-12z" fill="#b44da0"/><circle cx="71.6" cy="562.2" r="1.8" fill="#888"/><path d="M55.1 577.8v5h-5z" fill="#404040"/><rect x="61.6" y="574.3" width="12" height="12" fill="#b44da0"/><path d="M66.4 591.5l4 3-4 3z" fill="#fff" stroke="#9a9a9a" stroke-width="0.9"/><g fill="#b44da0"><ellipse cx="79.9" cy="592.5" rx="2" ry="1.4"/><ellipse cx="83.4" cy="595.5" rx="2" ry="1.4"/><ellipse cx="79.9" cy="598.5" rx="2" ry="1.4"/><ellipse cx="87.4" cy="599.0" rx="2" ry="1.4"/><ellipse cx="87.4" cy="590.5" rx="2" ry="1.4"/></g><path d="M81.4 593.5l5-3M84.4 596.5l3 2" stroke="#d89ccc" stroke-width="0.8"/><path d="M50.6 605.7l4 3-4 3z" fill="#fff" stroke="#9a9a9a" stroke-width="0.9"/><path d="M61.6 609.2c2-4.5 4-4.5 6 0s4 4.5 6 0" fill="none" stroke="#b44da0" stroke-width="1.1"/><path d="M50.6 619.8l4 3-4 3z" fill="#fff" stroke="#9a9a9a" stroke-width="0.9"/><path d="M61.6 623.3c2-4.5 4-4.5 6 0s4 4.5 6 0" fill="none" stroke="#b44da0" stroke-width="1.1"/><path d="M50.6 634.0l4 3-4 3z" fill="#fff" stroke="#9a9a9a" stroke-width="0.9"/><path d="M61.6 637.5c2-4.5 4-4.5 6 0s4 4.5 6 0" fill="none" stroke="#b44da0" stroke-width="1.1"/><path d="M50.6 648.2l4 3-4 3z" fill="#fff" stroke="#9a9a9a" stroke-width="0.9"/><path d="M61.6 651.7c2-4.5 4-4.5 6 0s4 4.5 6 0" fill="none" stroke="#b44da0" stroke-width="1.1"/><path d="M50.6 662.3l4 3-4 3z" fill="#fff" stroke="#9a9a9a" stroke-width="0.9"/><path d="M61.6 665.8c2-4.5 4-4.5 6 0s4 4.5 6 0" fill="none" stroke="#b44da0" stroke-width="1.1"/><path d="M50.6 676.5l4 3-4 3z" fill="#fff" stroke="#9a9a9a" stroke-width="0.9"/><path d="M61.6 680.0c2-4.5 4-4.5 6 0s4 4.5 6 0" fill="none" stroke="#b44da0" stroke-width="1.1"/><path d="M61.6 689.2h8l4 3.5v7.5h-11l-1-2z" fill="#b44da0"/><path d="M63.1 691.2h6M64.6 693.7h6" stroke="#f0c8e8" stroke-width="0.8"/><rect x="66.6" y="695.2" width="6" height="3" fill="none" stroke="#fff" stroke-width="0.7"/><rect x="63.1" y="703.4" width="9.5" height="10.5" fill="#fff" stroke="#b44da0" stroke-width="1.1"/><path d="M65.6 711.4l7.5-7.5" stroke="#b44da0" stroke-width="1.7"/><path d="M65.1 706.4h2.5M65.1 708.4h2" stroke="#d898c8" stroke-width="0.8"/></svg>

<!--/TREE-->
<div id="st" class="a"></div>

<div class="t" style="left:271.5px;top:124.8px;font-size:15.5px;letter-spacing:-0.5px;color:#3b97e6;-webkit-text-stroke:0">Settings</div>
<div class="t" style="left:271px;top:147.5px;font-size:11px;color:#3b97e6;-webkit-text-stroke:0">Drag Force</div>
<div class="lab" style="top:174px">Label:</div>
<div class="inp" style="left:302px;top:172px;width:183px;height:15px"></div><div class="lab" style="left:305px;top:174.4px">Drag Force 1</div>
<div class="a" style="left:491px;top:170.5px;width:17px;height:17px;background:#e6e6e6;border:1px solid #d0d0d0;border-radius:2px"></div>
<div class="sh" style="top:196px"></div><div class="sht" style="top:201.5px">Domain Selection</div>
<div class="sh" style="top:217.2px"></div><div class="sht" style="top:222.7px">Override and Contribution</div>
<div class="sh" style="top:238.5px"></div><div class="sht" style="top:244.0px">Equation</div>
<div class="sh" style="top:259.9px"></div><div class="sht" style="top:265.4px">Model Input</div>
<div class="sh" style="top:282.3px"></div><div class="sht" style="top:287.8px">Coordinate System Selection</div>
<div class="sh" style="top:304px"></div><div class="sht" style="top:309.5px">Drag Force</div>
<div class="sh" style="top:325.5px"></div><div class="sht" style="top:331.0px">Turbulent Dispersion</div>
<div class="sh" style="top:562.5px"></div><div class="sht" style="top:568.0px">Additional Terms</div>
<div class="sh" style="top:610px"></div><div class="sht" style="top:615.5px">Wall Corrections</div>
<div class="sh" style="top:750.5px"></div><div class="sht" style="top:756.0px">Advanced Settings</div>
<div class="lab" style="top:353.6px">Turbulent dispersion model:</div>
<div class="dd" style="left:270px;top:369.5px;width:238px;height:16px"></div>
<div class="lab" style="left:281px;top:373px">Continuous random walk</div>
<div class="lab" style="top:391.6px">Turbulent kinetic energy:</div>
<div class="lab" style="left:271px;top:411px;font-style:italic;font-size:10px">k</div>
<div class="dd" style="left:292px;top:408px;width:193px;height:16px"></div>
<div class="lab" style="left:302.5px;top:411.5px">Turbulent kinetic energy (spf)</div>
<div class="a" style="left:491px;top:407px;width:17px;height:17px;background:#ebebeb;border:1px solid #d3d3d3;border-radius:2px"></div>
<div class="lab" style="top:430.7px">Turbulent dissipation rate:</div>
<div class="lab" style="left:271px;top:450px;font-style:italic;font-size:10px">ε</div>
<div class="dd" style="left:292px;top:447.5px;width:169.5px;height:16px"></div>
<div class="lab" style="left:302.5px;top:451px">Turbulent dissipation rate (spf)</div>
<div class="a" style="left:468px;top:446.5px;width:17px;height:17px;background:#ebebeb;border:1px solid #d3d3d3;border-radius:2px"></div>
<div class="a" style="left:491px;top:446.5px;width:17px;height:17px;background:#f0f0f0;border:1px solid #e3e3e3;border-radius:2px"></div>
<div class="lab" style="top:470.4px">Lagrangian time scale coefficient:</div>
<div class="lab" style="left:271px;top:486.5px;font-style:italic;font-size:11px">C</div><div class="lab" style="left:279px;top:492px;font-size:8px">L</div>
<div class="inp" style="left:292px;top:485.5px;width:191px;height:15px"></div>
<div class="lab" style="left:294px;top:488.5px;font-size:9px">0.2</div>
<div class="lab" style="left:492.5px;top:488.5px">1</div>
<div class="a" style="left:270.5px;top:506px;width:11px;height:10.5px;background:#f4f4f4;border:1px solid #8a8a8a"></div>
<div class="lab" style="left:286px;top:506px">Include anisotropic turbulence in boundary layers</div>
<div class="lab" style="top:522.8px">Friction velocity:</div>
<div class="lab" style="left:271.5px;top:540px;font-style:italic;font-size:10.5px">u</div><div class="lab" style="left:277.5px;top:538px;font-size:9px">*</div>
<div class="inp" style="left:292px;top:538.5px;width:191px;height:15px"></div>
<div class="lab" style="left:294px;top:540.5px;font-size:9px">ustar_exp</div>
<div class="lab" style="left:491px;top:541.5px">m/s</div>
<div class="a" style="left:270.5px;top:589.5px;width:11.5px;height:10.5px;background:#f4f4f4;border:1px solid #8a8a8a"></div>
<div class="lab" style="left:286px;top:590px">Include virtual mass and pressure gradient forces</div>
<div class="lab" style="top:637.3px">Mesh search method:</div>
<div class="dd" style="left:270px;top:653px;width:238px;height:16px"></div>
<div class="lab" style="left:280.5px;top:657px">Use tolerance</div>
<div class="lab" style="top:675.4px">Search radius:</div>
<div class="lab" style="left:271px;top:693px;font-style:italic;font-size:10.5px">r</div>
<div class="inp" style="left:285px;top:690.5px;width:207px;height:15.5px;border-color:#6fb0ea"></div>
<div class="lab" style="left:288px;top:692.7px;font-size:9px">0.03</div>
<div class="lab" style="left:499.5px;top:694px">m</div>
<div class="lab" style="top:711.5px">Extrapolation tolerance:</div>
<div class="lab" style="left:271px;top:730px;font-style:italic;font-size:10.5px">t</div>
<div class="inp" style="left:285px;top:727.5px;width:207px;height:14px"></div>
<div class="lab" style="left:288px;top:728.7px;font-size:9px">0.3</div>
<div class="lab" style="left:499.5px;top:730px">1</div>
<svg class="a" style="left:0;top:0" width="520" height="802">
<path d="M490 130.5h6l-3 3.2z" fill="#3a89d0"/>
<path d="M503 128h4.5M504 128v4.5h2.5V128M502.5 132.5h5.5M505.2 132.5v3" stroke="#3a89d0" stroke-width="1" fill="#3a89d0"/>
<rect x="494.5" y="173.5" width="10" height="9" fill="#fff" stroke="#777" stroke-width="0.9"/><path d="M494.5 175.5h10" stroke="#777" stroke-width="0.8"/><rect x="497.5" y="177" width="6" height="2.2" fill="#5cc8a8"/><path d="M494 184.5l3-3M494.5 181.5h2.5v2.5" fill="none" stroke="#1a9a6a" stroke-width="1.1"/>
<path d="M271.5 202.75l3.6 3-3.6 3z" fill="#fff" stroke="#a8a8a8" stroke-width="0.9"/><path d="M271.5 223.95l3.6 3-3.6 3z" fill="#fff" stroke="#a8a8a8" stroke-width="0.9"/><path d="M271.5 245.25l3.6 3-3.6 3z" fill="#fff" stroke="#a8a8a8" stroke-width="0.9"/><path d="M271.5 266.65l3.6 3-3.6 3z" fill="#fff" stroke="#a8a8a8" stroke-width="0.9"/><path d="M271.5 289.05l3.6 3-3.6 3z" fill="#fff" stroke="#a8a8a8" stroke-width="0.9"/><path d="M271.5 310.75l3.6 3-3.6 3z" fill="#fff" stroke="#a8a8a8" stroke-width="0.9"/><path d="M270.5 333.05h6l-3 3.8z" fill="#333"/><path d="M270.5 570.05h6l-3 3.8z" fill="#333"/><path d="M270.5 617.55h6l-3 3.8z" fill="#333"/><path d="M271.5 757.25l3.6 3-3.6 3z" fill="#fff" stroke="#a8a8a8" stroke-width="0.9"/>
<rect x="494" y="266.5" width="9" height="8" fill="#fff" stroke="#bbb" stroke-width="0.7"/><path d="M494 269h9M494 271.8h9M497 266.5v8M500 266.5v8" stroke="#ccc" stroke-width="0.5"/><path d="M496.5 272.5l6.5-6.5 2 2-6.5 6.5-2.5.5z" fill="#3a7cc8"/>
<path d="M497 376.5h5l-2.5 3z" fill="#222"/>
<path d="M474 414.5h5l-2.5 3z" fill="#222"/>
<path d="M451 454h5l-2.5 3z" fill="#222"/>
<path d="M497 660h5l-2.5 3z" fill="#222"/>
<path d="M494.5 410.5h3M494.5 412.7h3M494.5 417.1h3M494.5 419.3h3M494.5 421.5h3M496.0 410.5v11" stroke="#666" stroke-width="0.8"/><path d="M494.5 414.9h3" stroke="#3a89d0" stroke-width="1.4"/><path d="M498.5 421.5h3.5v-6.5h-3" fill="none" stroke="#3a89d0" stroke-width="1"/><path d="M498.0 415.0l2-2v4z" fill="#3a89d0"/>
<path d="M471.5 449.5h3M471.5 451.7h3M471.5 456.1h3M471.5 458.3h3M471.5 460.5h3M473.0 449.5v11" stroke="#666" stroke-width="0.8"/><path d="M471.5 453.9h3" stroke="#3a89d0" stroke-width="1.4"/><path d="M475.5 460.5h3.5v-6.5h-3" fill="none" stroke="#3a89d0" stroke-width="1"/><path d="M475.0 454.0l2-2v4z" fill="#3a89d0"/>
<g fill="#e2e2e2"><circle cx="496" cy="452" r="1"/><circle cx="502" cy="452" r="1"/><circle cx="499" cy="455" r="1"/><circle cx="496" cy="458" r="1"/><circle cx="502" cy="458" r="1"/><circle cx="499" cy="461" r="1"/></g>
<path d="M272.5 511l2.5 2.8 4.5-6" fill="none" stroke="#111" stroke-width="1.6"/>
</svg>

<div id="gr" class="a"></div>
<div class="a" style="left:517px;top:119px;width:940px;height:22px;background:#f8f9fc"></div>
<div class="a" style="left:517px;top:141px;width:940px;height:1px;background:#dcdde2"></div>
<div class="a" style="left:520.5px;top:122.8px;width:46.5px;height:18px;background:#e7e7e9"></div>
<div class="a" style="left:573px;top:122.5px;width:49.5px;height:19.5px;background:#f8f9fd;border:1px solid #dcdde2;border-bottom:none"></div>
<div class="t" style="left:524px;top:128.2px;font-size:9.8px;color:#222">Graphics</div>
<div class="t" style="left:577.5px;top:128.2px;font-size:9.8px;color:#3a68ad">Plot 1</div>
<div class="a" style="left:517px;top:142px;width:940px;height:21px;background:#f8f9fd"></div>
<div class="a" style="left:517px;top:163px;width:940px;height:610px;background:#fff"></div>
<canvas id="cv" class="a" style="left:0;top:0" width="1486" height="802"></canvas>
<svg class="a" style="left:0;top:0" width="1486" height="802"><path d="M610 130l6 6M616 130l-6 6" stroke="#a8a8a8" stroke-width="0.9"/><path d="M1439 131h5.5l-2.75 3z" fill="#333"/><path d="M1449 128h4M1450 128v4.5h2V128M1448.5 132.5h5M1451 132.5v3" stroke="#333" stroke-width="1" fill="#333"/><circle cx="527.5" cy="152.5" r="3.8" fill="none" stroke="#3a89d0" stroke-width="1.4"/><path d="M530.3 155.3l3.2 3.2" stroke="#3a89d0" stroke-width="1.8"/><path d="M525.5 152.5h4M527.5 150.5v4" stroke="#3a89d0" stroke-width="1"/><circle cx="545.5" cy="152.5" r="3.8" fill="none" stroke="#3a89d0" stroke-width="1.4"/><path d="M548.3 155.3l3.2 3.2" stroke="#3a89d0" stroke-width="1.8"/><path d="M543.5 152.5h4" stroke="#3a89d0" stroke-width="1"/><rect x="559.5" y="152.5" width="6" height="5" fill="none" stroke="#3a89d0" stroke-width="0.8" stroke-dasharray="1 1"/><circle cx="566" cy="152" r="3.5" fill="#fff" stroke="#3a89d0" stroke-width="1.3"/><path d="M568.5 154.5l3 3" stroke="#3a89d0" stroke-width="1.7"/><path d="M564.3 152h3.5M566 150.3v3.5" stroke="#3a89d0" stroke-width="0.9"/><path d="M577.5 151.5h5l-2.5 3z" fill="#222"/><rect x="591.5" y="147.5" width="12" height="11.5" fill="#fff" stroke="#777" stroke-width="0.9"/><path d="M597.5 149.5v7.5M593.5 153.3h8" stroke="#3a89d0" stroke-width="0.9"/><path d="M596 150.5l1.5-1.5 1.5 1.5M596 155.5l1.5 1.5 1.5-1.5M594.5 151.8l-1.5 1.5 1.5 1.5M600.5 151.8l1.5 1.5-1.5 1.5" fill="none" stroke="#3a89d0" stroke-width="0.9"/><path d="M610.5 146v14M653.5 146v14M676.5 146v14" stroke="#d9dadf"/><rect x="615" y="146" width="14.5" height="14.5" rx="1.5" fill="#a6cdf1" stroke="#3a89d0" stroke-width="1"/><rect x="617.5" y="148.5" width="9.5" height="9.5" fill="#fff" stroke="#3a5a90" stroke-width="0.8"/><path d="M617.5 151h9.5M617.5 153.3h9.5M617.5 155.6h9.5M619.9 148.5v9.5M622.3 148.5v9.5M624.6 148.5v9.5" stroke="#3a5a90" stroke-width="0.5"/><rect x="633" y="146" width="14.5" height="14.5" rx="1.5" fill="#a6cdf1" stroke="#3a89d0" stroke-width="1"/><rect x="635.5" y="148.5" width="9.5" height="9.5" fill="#d7e8f8" stroke="#555" stroke-width="0.6"/><rect x="641.5" y="149.5" width="2" height="8" fill="#e04020"/><rect x="641.5" y="153.5" width="2" height="4" fill="#f0c020"/><path d="M661 158v-6.5a3.8 4 0 0 1 7.6 0V158z" fill="#3a89d0"/><path d="M663.3 151.2a1.5 1.6 0 0 1 3 0" fill="none" stroke="#fff" stroke-width="1"/><circle cx="689" cy="153.3" r="4.5" fill="none" stroke="#3a89d0" stroke-width="2.3"/><path d="M689 148.3l1 3.2M693.8 151.7l-2.9 1.5M692.2 157.6l-1.8-2.8M686 157.6l1.6-2.8M684.2 151.8l3 1.2" stroke="#fff" stroke-width="0.9"/><path d="M701.5 151.5h5l-2.5 3z" fill="#222"/><path d="M715 150h3.5l1.2-1.5h4.5l1.2 1.5h2.6v8h-13z" fill="#3a89d0"/><circle cx="721.5" cy="154" r="2.6" fill="none" stroke="#fff" stroke-width="1"/><circle cx="716.8" cy="151.5" r="0.6" fill="#fff"/><rect x="737" y="147.5" width="6.5" height="3" rx="1" fill="#fff" stroke="#3a89d0" stroke-width="1"/><rect x="734.5" y="150.5" width="11" height="5.5" rx="1.3" fill="#c4dcf2" stroke="#3a89d0" stroke-width="1"/><rect x="737" y="155" width="6.5" height="4.5" rx="1" fill="#fff" stroke="#3a89d0" stroke-width="1"/><rect x="555.5" y="191.5" width="829" height="563" fill="none" stroke="#7a7a7a" stroke-width="1"/><path d="M593.3 754.5v-5M593.3 191.5v5M668.6 754.5v-5M668.6 191.5v5M743.9 754.5v-5M743.9 191.5v5M819.2 754.5v-5M819.2 191.5v5M894.5 754.5v-5M894.5 191.5v5M969.8 754.5v-5M969.8 191.5v5M1045.2 754.5v-5M1045.2 191.5v5M1120.5 754.5v-5M1120.5 191.5v5M1195.8 754.5v-5M1195.8 191.5v5M1271.1 754.5v-5M1271.1 191.5v5M1346.4 754.5v-5M1346.4 191.5v5M555.5 729.1h5M1384.5 729.1h-5M555.5 677.8h5M1384.5 677.8h-5M555.5 626.5h5M1384.5 626.5h-5M555.5 575.2h5M1384.5 575.2h-5M555.5 523.9h5M1384.5 523.9h-5M555.5 472.7h5M1384.5 472.7h-5M555.5 421.4h5M1384.5 421.4h-5M555.5 370.1h5M1384.5 370.1h-5M555.5 318.8h5M1384.5 318.8h-5M555.5 267.5h5M1384.5 267.5h-5M555.5 216.2h5M1384.5 216.2h-5" stroke="#7a7a7a" stroke-width="1"/><rect x="593.5" y="217.5" width="754" height="511.5" fill="none" stroke="#1e1e1e" stroke-width="1.1"/><text x="1440" y="0"></text></svg>
<div class="t pl" style="left:553.3px;width:80px;text-align:center;top:761px">0</div><div class="t pl" style="left:628.6px;width:80px;text-align:center;top:761px">0.002</div><div class="t pl" style="left:703.9px;width:80px;text-align:center;top:761px">0.004</div><div class="t pl" style="left:779.2px;width:80px;text-align:center;top:761px">0.006</div><div class="t pl" style="left:854.5px;width:80px;text-align:center;top:761px">0.008</div><div class="t pl" style="left:929.8px;width:80px;text-align:center;top:761px">0.01</div><div class="t pl" style="left:1005.2px;width:80px;text-align:center;top:761px">0.012</div><div class="t pl" style="left:1080.5px;width:80px;text-align:center;top:761px">0.014</div><div class="t pl" style="left:1155.8px;width:80px;text-align:center;top:761px">0.016</div><div class="t pl" style="left:1231.1px;width:80px;text-align:center;top:761px">0.018</div><div class="t pl" style="left:1306.4px;width:80px;text-align:center;top:761px">0.02</div><div class="t pl" style="left:500px;width:52px;text-align:right;top:725.5px">0</div><div class="t pl" style="left:500px;width:52px;text-align:right;top:674.2px">1</div><div class="t pl" style="left:500px;width:52px;text-align:right;top:622.9px">2</div><div class="t pl" style="left:500px;width:52px;text-align:right;top:571.6px">3</div><div class="t pl" style="left:500px;width:52px;text-align:right;top:520.3px">4</div><div class="t pl" style="left:500px;width:52px;text-align:right;top:469.1px">5</div><div class="t pl" style="left:500px;width:52px;text-align:right;top:417.8px">6</div><div class="t pl" style="left:500px;width:52px;text-align:right;top:366.5px">7</div><div class="t pl" style="left:500px;width:52px;text-align:right;top:315.2px">8</div><div class="t pl" style="left:500px;width:52px;text-align:right;top:263.9px">9</div><div class="t pl" style="left:500px;width:52px;text-align:right;top:212.6px">10</div><div class="t pl" style="left:519px;top:188px">m</div><div class="t pl" style="left:1377.5px;top:761px">m</div><div class="t" style="left:530px;top:175.1px;font-size:10.2px;letter-spacing:0.55px;color:#222">St(5)=25 Time=1.2739 s</div><div class="t" style="left:870px;width:200px;text-align:center;top:175.1px;font-size:10.2px;letter-spacing:0.45px;color:#222">Particle trajectories</div><div class="t pl" style="left:1420.5px;top:248.4px">2.2</div><div class="t pl" style="left:1420.5px;top:320.2px">2</div><div class="t pl" style="left:1420.5px;top:392.0px">1.8</div><div class="t pl" style="left:1420.5px;top:463.8px">1.6</div><div class="t pl" style="left:1420.5px;top:535.6px">1.4</div><div class="t pl" style="left:1420.5px;top:607.4px">1.2</div><div class="t pl" style="left:1420.5px;top:679.2px">1</div>
<div class="a" style="left:1401px;top:216px;width:12px;height:534px;background:linear-gradient(to bottom,#6a0010 0.0%,#b40000 6.9%,#dc2800 13.9%,#ec6000 20.4%,#f09800 27.0%,#e8c800 33.7%,#d8e818 40.1%,#b0f048 47.2%,#70f090 54.1%,#38e0d0 60.7%,#30c0f0 67.2%,#2898f0 74.2%,#2a70f0 80.9%,#2c48e0 87.5%,#2030b8 94.4%,#181890 100.0%)"></div>
<svg class="a" style="left:0;top:0" width="1486" height="802"><path d="M1401 253.3h2M1411 253.3h2M1401 325.1h2M1411 325.1h2M1401 396.9h2M1411 396.9h2M1401 468.7h2M1411 468.7h2M1401 540.5h2M1411 540.5h2M1401 612.3h2M1411 612.3h2M1401 684.1h2M1411 684.1h2" stroke="#000" stroke-width="1"/><rect x="1440" y="170.5" width="11.5" height="8.5" rx="2" fill="#2a3f9a"/><path d="M1442.5 172.5h4l2.5 2-2.5 2h-4z" fill="#f2d21a"/></svg>



<div class="t" style="left:1475px;top:123px;transform:rotate(90deg);transform-origin:0 0;font-size:9.2px;color:#3a5a9a">Messages</div>
<div class="t" style="left:1475px;top:172px;transform:rotate(90deg);transform-origin:0 0;font-size:9.2px;color:#3a5a9a">Progress</div>
<div class="t" style="left:1475px;top:217px;transform:rotate(90deg);transform-origin:0 0;font-size:9.2px;color:#3a5a9a">Log</div>
<div class="t" style="left:946px;top:785px;font-size:9px;letter-spacing:-0.3px;color:#222">1.48 GB | 1.65 GB</div>

<script>
(function(){
var c=document.getElementById('cv');var g=c.getContext('2d');
var s=12345;function R(){s|=0;s=s+0x6D2B79F5|0;var t=Math.imul(s^s>>>15,1|s);t=t+Math.imul(t^t>>>7,61|t)^t;return((t^t>>>14)>>>0)/4294967296;}
function N(){var u=R()||1e-9,v=R();return Math.sqrt(-2*Math.log(u))*Math.cos(6.283185*v);}
var st=[[0,[24,24,144]],[0.056,[32,48,184]],[0.125,[44,72,224]],[0.19,[42,112,240]],[0.258,[40,152,240]],[0.326,[48,192,240]],[0.393,[56,224,208]],[0.459,[112,240,144]],[0.528,[176,240,72]],[0.599,[216,232,24]],[0.663,[232,200,0]],[0.73,[240,152,0]],[0.796,[236,96,0]],[0.861,[220,40,0]],[0.931,[180,0,0]],[1,[106,0,16]]];
function col(v){var f=(v-0.813)/1.487;if(f<0)f=0;if(f>1)f=1;for(var i=1;i<st.length;i++){if(f<=st[i][0]){var a=st[i-1],b=st[i],t=(f-a[0])/(b[0]-a[0]);var r=a[1][0]+(b[1][0]-a[1][0])*t,gg=a[1][1]+(b[1][1]-a[1][1])*t,bb=a[1][2]+(b[1][2]-a[1][2])*t;return 'rgb('+(r|0)+','+(gg|0)+','+(bb|0)+')';}}return 'rgb(106,0,16)';}
var X0=594.5,X1=1346.5;
function dot(x,y,v){g.fillStyle=col(v);g.fillRect(x,y,1.4,1.4);}
var n=0;
while(n<6000){
  var p=R();
  if(R()>(1+1.6*p*p*p)/2.6) continue;
  n++;
  var x=X0+(X1-X0)*p;
  var core=371+9*p*p, tail=389+8*p*p;
  var y;
  if(R()<0.75){y=352+(core-352)*Math.pow(R(),1.15)+0.8*N();}else{y=357+(tail-357)*Math.pow(R(),0.85);}
  var mean;
  if(p<0.5)mean=1.8-0.08*p; else if(p<0.85)mean=1.76-0.9*(p-0.5); else mean=1.445-1.2*(p-0.85);
  var sd=0.07+0.17*Math.min(1,p*1.5);
  dot(x,y,mean+sd*N());
}
for(var i=0;i<900;i++){
  var q=Math.pow(R(),0.35);
  var x=1270+(X1-1270)*q;
  var top=354+2*q, bot=380+17*q*q;
  var y=top+(bot-top)*R();
  var v=1.2+0.06*N();
  if(R()<0.3) v=1.0+0.5*R();
  dot(x,y,v);
}
for(var i=0;i<750;i++){
  var x=1316+31*Math.pow(R(),0.6);var f=(x-1316)/31;var y=356+(24+18*f)*R();
  dot(x,y,1.21+0.02*N());
}
})();
</script>
</body></html>
